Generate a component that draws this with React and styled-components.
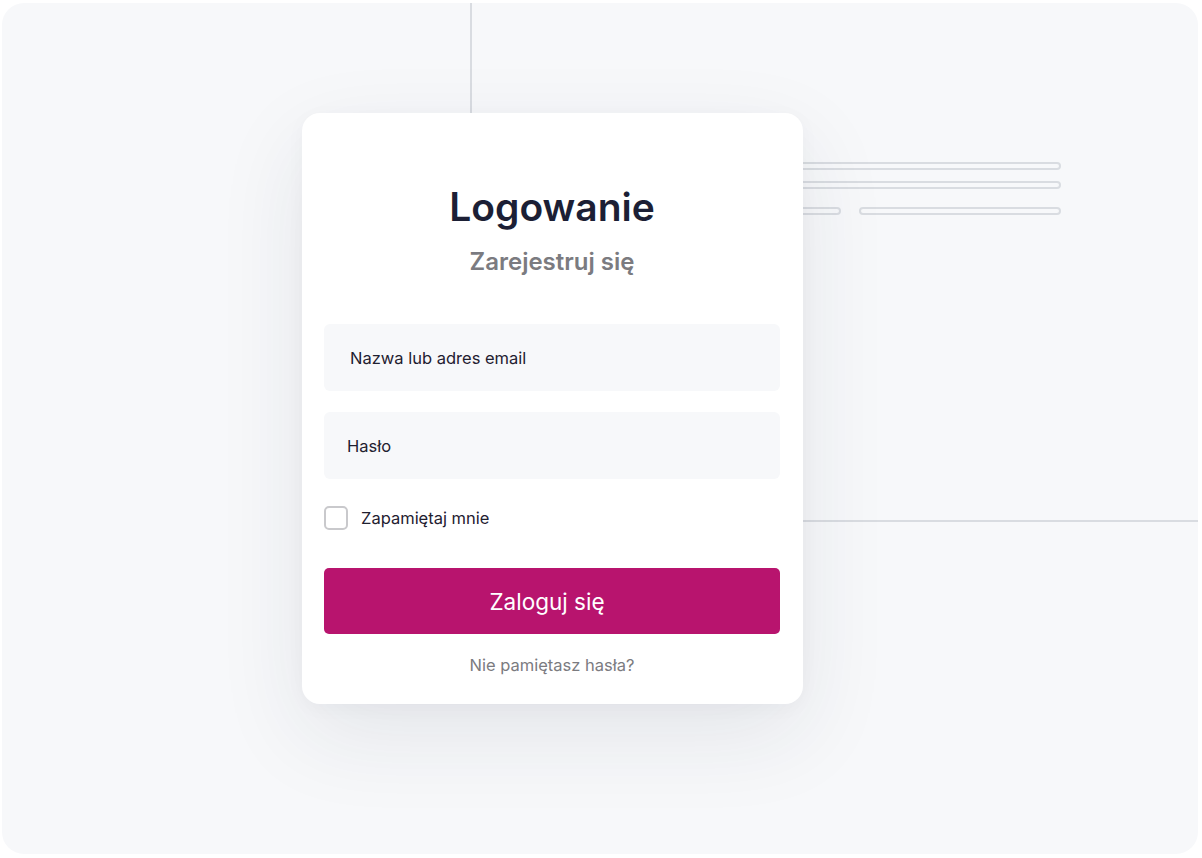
import React from "react";
import styled, { createGlobalStyle } from "styled-components";

const GlobalStyle = createGlobalStyle`
  body {
    margin: 0;
    background: #ffffff;
    font-family: Inter, "Noto Sans", sans-serif;
  }
`;

const Frame = styled.div`
  position: relative;
  margin: 3px 4px 4px 2px;
  height: 851px;
  border-radius: 22px;
  background: #f7f8fa;
  overflow: hidden;
  padding: 110px 0 0 300px;
  box-sizing: border-box;
`;

/* decorative wireframe strokes behind the card */
const VLine = styled.div`
  position: absolute;
  left: 468px;
  top: 0;
  width: 2px;
  height: 130px;
  background: #d9dce1;
`;

const HLine = styled.div`
  position: absolute;
  left: 700px;
  right: 0;
  top: 517px;
  height: 2px;
  background: #d9dce1;
`;

const Pill = styled.div`
  position: absolute;
  top: ${({ top }) => top}px;
  left: ${({ left }) => left}px;
  width: ${({ width }) => width}px;
  height: 8px;
  box-sizing: border-box;
  border: 2px solid #d9dce1;
  border-radius: 5px;
`;

const Card = styled.div`
  position: relative;
  width: 501px;
  box-sizing: border-box;
  padding: 72px 23px 29px 22px;
  background: #ffffff;
  border-radius: 18px;
  box-shadow: 0 30px 90px rgba(30, 40, 70, 0.09), 0 4px 20px rgba(30, 40, 70, 0.03);
  display: flex;
  flex-direction: column;
`;

const Title = styled.h1`
  margin: 0;
  text-align: center;
  font-size: 39px;
  line-height: 44px;
  font-weight: 600;
  color: #1c1f35;
`;

const Subtitle = styled.div`
  margin-top: 19px;
  text-align: center;
  font-size: 24px;
  line-height: 28px;
  font-weight: 600;
  color: #7b7b80;
`;

const Fields = styled.div`
  margin-top: 48px;
  display: flex;
  flex-direction: column;
  gap: 21px;
`;

const Field = styled.div`
  height: 67px;
  border-radius: 6px;
  background: #f7f8fa;
  display: flex;
  align-items: center;
  padding-left: ${({ indent }) => indent}px;
  font-size: 16.5px;
  color: #1f2030;
`;

const RememberRow = styled.label`
  margin-top: 27px;
  display: flex;
  align-items: center;
  gap: 13px;
  font-size: 16.5px;
  color: #1f2030;
`;

const Box = styled.span`
  width: 24px;
  height: 24px;
  box-sizing: border-box;
  border: 2px solid #c9c9cc;
  border-radius: 5px;
  background: #ffffff;
`;

const SubmitButton = styled.button`
  margin-top: 38px;
  height: 66px;
  border: none;
  border-radius: 5px;
  background: #b8146e;
  color: #ffffff;
  font-family: Inter, "Noto Sans", sans-serif;
  font-size: 22.5px;
  font-weight: 400;
  padding: 0 10px 0 0;
  cursor: pointer;
`;

const Forgot = styled.a`
  margin-top: 21px;
  text-align: center;
  font-size: 16.5px;
  line-height: 20px;
  color: #7b7b80;
  text-decoration: none;
`;

export default function App() {
  return (
    <>
      <GlobalStyle />
      <Frame>
        <VLine />
        <HLine />
        <Pill top={159} left={700} width={359} />
        <Pill top={178} left={700} width={359} />
        <Pill top={204} left={700} width={139} />
        <Pill top={204} left={857} width={202} />
        <Card>
          <Title>Logowanie</Title>
          <Subtitle>Zarejestruj się</Subtitle>
          <Fields>
            <Field indent={26}>Nazwa lub adres email</Field>
            <Field indent={23}>Hasło</Field>
          </Fields>
          <RememberRow>
            <Box />
            Zapamiętaj mnie
          </RememberRow>
          <SubmitButton>Zaloguj się</SubmitButton>
          <Forgot href="#">Nie pamiętasz hasła?</Forgot>
        </Card>
      </Frame>
    </>
  );
}
